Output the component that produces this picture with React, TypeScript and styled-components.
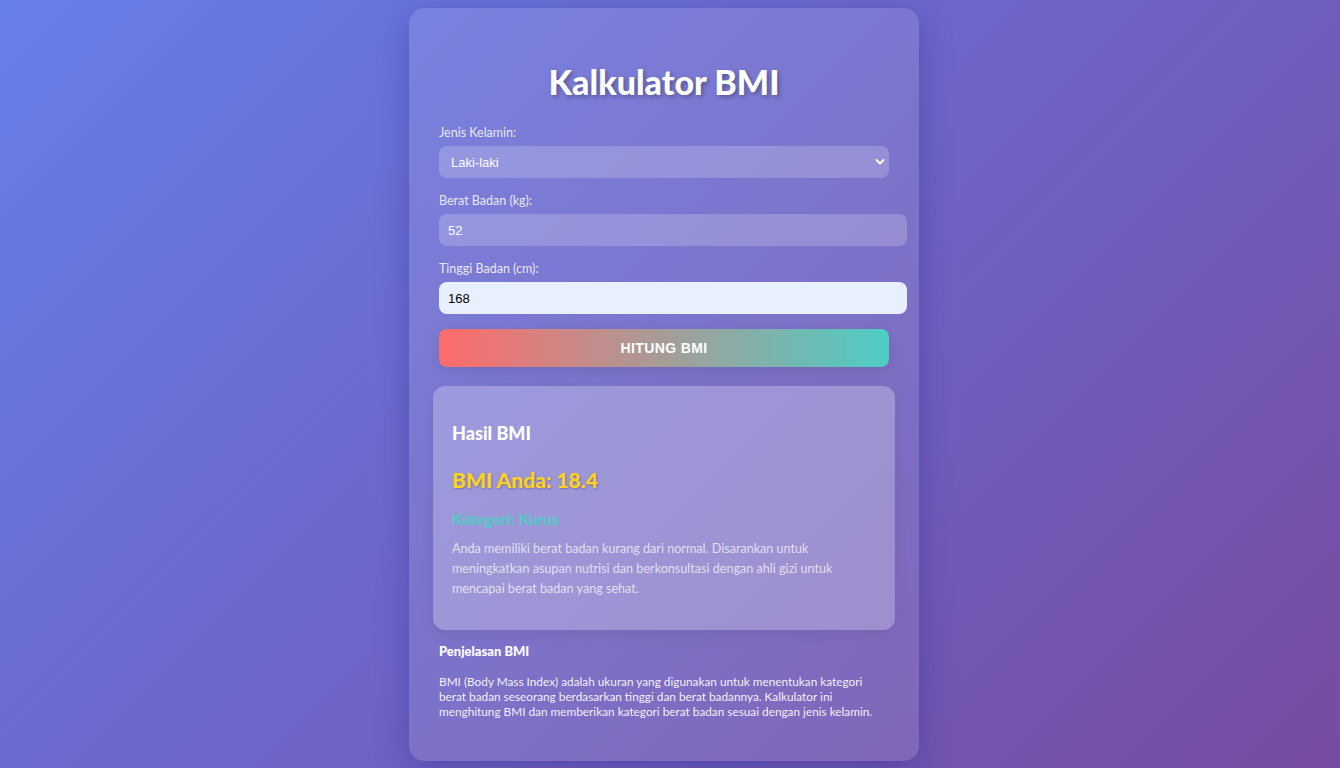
import React from "react";
import styled, { createGlobalStyle } from "styled-components";

const Global = createGlobalStyle`
  html, body { margin: 0; padding: 0; }
  body {
    min-height: 768px;
    background: linear-gradient(135deg, #667eea 0%, #764ba2 100%);
    font-family: "Lato", "Noto Sans", sans-serif;
  }
  * { box-sizing: border-box; }
`;

const Page = styled.div`
  display: flex;
  justify-content: center;
  padding: 8px 12px 8px 0;
`;

const Card = styled.div`
  width: 510px;
  padding: 30px;
  background: rgba(255, 255, 255, 0.1);
  border-radius: 15px;
  box-shadow: 0 8px 32px rgba(31, 38, 135, 0.37);
  color: #fff;
`;

const Title = styled.h1`
  margin: 23px 0 22px;
  font-size: 34px;
  line-height: 42px;
  font-weight: 900;
  text-align: center;
  color: #fff;
  text-shadow: 2px 2px 4px rgba(0, 0, 0, 0.3);
`;

const Group = styled.div`
  margin-bottom: 15px;
`;

const Label = styled.label`
  display: block;
  font-size: 12.5px;
  line-height: 16px;
  margin-bottom: 5px;
  color: rgba(255, 255, 255, 0.85);
`;

const SelectWrap = styled.div`
  position: relative;
  width: 450px;
`;

const Select = styled.select`
  appearance: none;
  width: 100%;
  height: 32px;
  padding: 0 12px;
  border: none;
  border-radius: 8px;
  background: rgba(255, 255, 255, 0.2);
  color: #fff;
  font-family: "Liberation Sans", Arial, sans-serif;
  font-size: 13px;
  outline: none;
`;

const Chevron = styled.svg`
  position: absolute;
  right: 4px;
  top: 12px;
  pointer-events: none;
`;

const Input = styled.input<{ $focused?: boolean }>`
  display: block;
  width: 468px;
  height: 32px;
  padding: 0 8px;
  border: 1px solid transparent;
  border-radius: 8px;
  background: ${(p) => (p.$focused ? "#e8f0fe" : "rgba(255, 255, 255, 0.2)")};
  color: ${(p) => (p.$focused ? "#000" : "#fff")};
  font-family: "Liberation Sans", Arial, sans-serif;
  font-size: 13px;
  outline: none;
`;

const Button = styled.button`
  display: block;
  width: 450px;
  height: 38px;
  border: none;
  border-radius: 8px;
  background: linear-gradient(90deg, #ff6b6b, #4ecdc4);
  color: #fff;
  font-family: "Liberation Sans", Arial, sans-serif;
  font-size: 14px;
  font-weight: 700;
  letter-spacing: 0.4px;
  box-shadow: 0 4px 15px rgba(0, 0, 0, 0.1);
  cursor: pointer;
`;

const Result = styled.div`
  margin: 19px -6px 0;
  padding: 20px 19px;
  background: rgba(255, 255, 255, 0.25);
  border-radius: 12px;
  box-shadow: 0 4px 15px rgba(0, 0, 0, 0.08);
`;

const ResultTitle = styled.h3`
  margin: 16px 0 23px;
  font-size: 18px;
  line-height: 22px;
  font-weight: 900;
  color: #fff;
`;

const BmiValue = styled.div`
  font-size: 21px;
  line-height: 26px;
  font-weight: 900;
  color: #ffd21f;
  text-shadow: 1px 1px 2px rgba(0, 0, 0, 0.25);
  margin-bottom: 17px;
`;

const Category = styled.div`
  font-size: 15.5px;
  line-height: 18px;
  font-weight: 700;
  color: #4ecdc4;
  margin-bottom: 11px;
`;

const Desc = styled.p`
  margin: 0 0 11px;
  font-size: 12.6px;
  line-height: 20px;
  color: rgba(255, 255, 255, 0.72);
  max-width: 410px;
`;

const InfoTitle = styled.h4`
  margin: 13px 0 14.5px;
  font-size: 13px;
  line-height: 16px;
  font-weight: 900;
  color: #fff;
`;

const InfoText = styled.p`
  margin: 0 0 12px;
  font-size: 11.8px;
  line-height: 15px;
  color: rgba(255, 255, 255, 0.92);
  max-width: 440px;
`;

export default function App() {
  return (
    <>
      <Global />
      <Page>
        <Card>
          <Title>Kalkulator BMI</Title>
          <Group>
            <Label>Jenis Kelamin:</Label>
            <SelectWrap>
              <Select defaultValue="l">
                <option value="l">Laki-laki</option>
                <option value="p">Perempuan</option>
              </Select>
              <Chevron width="10" height="8" viewBox="0 0 10 8">
                <path d="M1.5 2 L5 5.5 L8.5 2" fill="none" stroke="#fff" strokeWidth="1.8" strokeLinecap="round" strokeLinejoin="round" />
              </Chevron>
            </SelectWrap>
          </Group>
          <Group>
            <Label>Berat Badan (kg):</Label>
            <Input type="text" defaultValue="52" />
          </Group>
          <Group>
            <Label>Tinggi Badan (cm):</Label>
            <Input type="text" defaultValue="168" $focused />
          </Group>
          <Button>HITUNG BMI</Button>
          <Result>
            <ResultTitle>Hasil BMI</ResultTitle>
            <BmiValue>BMI Anda: 18.4</BmiValue>
            <Category>Kategori: Kurus</Category>
            <Desc>
              Anda memiliki berat badan kurang dari normal. Disarankan untuk meningkatkan asupan nutrisi dan berkonsultasi dengan ahli gizi untuk mencapai berat badan yang sehat.
            </Desc>
          </Result>
          <InfoTitle>Penjelasan BMI</InfoTitle>
          <InfoText>
            BMI (Body Mass Index) adalah ukuran yang digunakan untuk menentukan kategori berat badan seseorang berdasarkan tinggi dan berat badannya. Kalkulator ini menghitung BMI dan memberikan kategori berat badan sesuai dengan jenis kelamin.
          </InfoText>
        </Card>
      </Page>
    </>
  );
}
